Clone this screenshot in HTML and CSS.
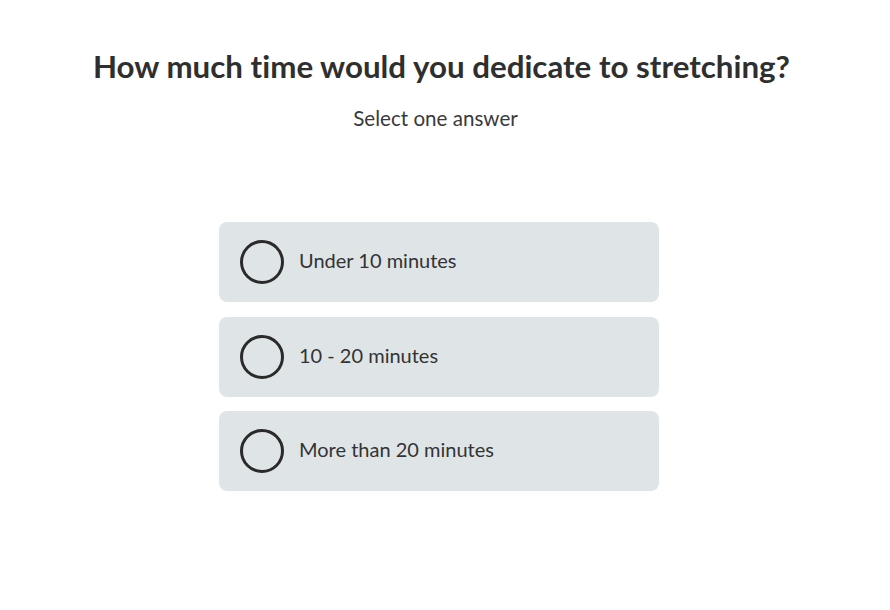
FILE: index.html
```html
<!DOCTYPE html>
<html lang="en">
<head>
    <meta charset="UTF-8">
    <meta name="viewport" content="width=device-width, initial-scale=1.0">
    <title>Stretching Quiz</title>
    <link rel="stylesheet" href="styles.css">
</head>
<body>
    <div class="main-content">
        <h1>How much time would you dedicate to stretching?</h1>
        <p class="hint">Select one answer</p>
        <div class="answers">
            <label class="answer">
                <span class="radio"></span>
                <span class="answer-text">Under 10 minutes</span>
            </label>
            <label class="answer">
                <span class="radio"></span>
                <span class="answer-text">10 - 20 minutes</span>
            </label>
            <label class="answer">
                <span class="radio"></span>
                <span class="answer-text">More than 20 minutes</span>
            </label>
        </div>
    </div>
</body>
</html>
```

FILE: styles.css
```css
/* CSS styles */
* {
    margin: 0;
    padding: 0;
    box-sizing: border-box;
}
body {
    background: #ffffff;
    font-family: "Lato", "Open Sans", sans-serif;
    font-variant-ligatures: none;
    color: #333333;
}
.main-content {
    padding-top: 48px;
    text-align: center;
}
.main-content h1 {
    font-size: 31.3px;
    line-height: 36px;
    font-weight: 700;
    color: #2f2f2f;
    padding-right: 7px;
}
.hint {
    margin-top: 21px;
    padding-right: 19px;
    font-size: 20.6px;
    line-height: 26px;
    color: #3a3a3a;
}
.answers {
    width: 452px;
    margin: 91px auto 0;
    padding-right: 12px;
    display: flex;
    flex-direction: column;
    gap: 14.5px;
}
.answer {
    height: 80px;
    display: flex;
    align-items: center;
    gap: 15px;
    padding-left: 21px;
    background-color: #dfe5e7;
    border-radius: 8px;
    cursor: pointer;
}
.radio {
    width: 44px;
    height: 44px;
    border: 3px solid #2a2a2a;
    border-radius: 50%;
    flex-shrink: 0;
}
.answer-text {
    font-size: 20px;
    line-height: 24px;
    padding-bottom: 4px;
    color: #333333;
}
```
